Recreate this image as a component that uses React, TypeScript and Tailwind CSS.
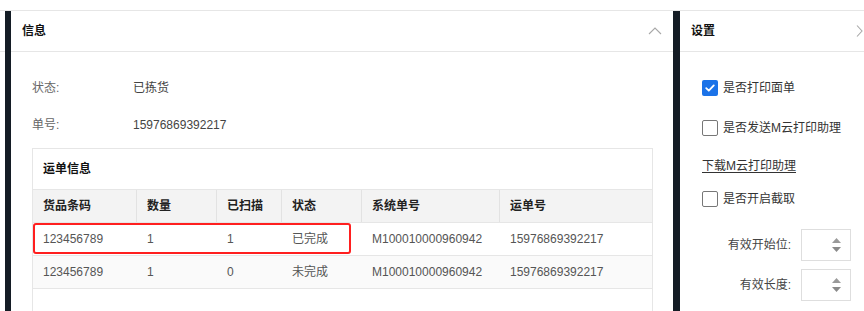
import React from "react";

const font = { fontFamily: '"Liberation Sans", "Noto Sans CJK SC", sans-serif' };

function Checkbox({ checked }: { checked?: boolean }) {
  if (checked) {
    return (
      <span className="w-[16px] h-[16px] rounded-[2px] bg-[#1b73e8] flex items-center justify-center shrink-0">
        <svg width="12" height="12" viewBox="0 0 12 12">
          <path d="M2.2 6.2 L4.8 8.7 L9.8 3.4" fill="none" stroke="#fff" strokeWidth="1.8" strokeLinecap="round" strokeLinejoin="round" />
        </svg>
      </span>
    );
  }
  return <span className="w-[16px] h-[16px] rounded-[2px] border border-[#777] bg-white shrink-0" />;
}

function NumInput() {
  return (
    <div className="w-[50px] h-[32px] border border-[#dedede] bg-white flex justify-end items-center pr-[9px] shrink-0">
      <div className="flex flex-col gap-[4px]">
        <svg width="9" height="5" viewBox="0 0 9 5"><path d="M0 5 L4.5 0 L9 5 Z" fill="#9a9a9a" /></svg>
        <svg width="9" height="5" viewBox="0 0 9 5"><path d="M0 0 L4.5 5 L9 0 Z" fill="#8a8a8a" /></svg>
      </div>
    </div>
  );
}

const cols = [
  { title: "货品条码", w: "w-[104px]" },
  { title: "数量", w: "w-[80px]" },
  { title: "已扫描", w: "w-[65px]" },
  { title: "状态", w: "w-[80px]" },
  { title: "系统单号", w: "w-[138px]" },
  { title: "运单号", w: "flex-1" },
];

const rows = [
  ["123456789", "1", "1", "已完成", "M100010000960942", "15976869392217"],
  ["123456789", "1", "0", "未完成", "M100010000960942", "15976869392217"],
];

export default function App() {
  return (
    <div className="w-[864px] h-[311px] overflow-hidden bg-white text-[12px] text-[#333]" style={font}>
      <div className="h-[10px]" />
      <div className="flex border-t border-[#e6e6e6] h-[301px] overflow-hidden">
        {/* left strip */}
        <div className="w-[5px] flex flex-col">
          <div className="h-[41px] shrink-0 border-b border-[#e6e6e6]" />
        </div>
        <div className="w-[6px] bg-[#141c25]" />
        {/* main panel */}
        <div className="w-[662px] flex flex-col">
          <div className="h-[41px] shrink-0 border-b border-[#e6e6e6] flex items-center justify-between pl-[11px] pr-[11px]">
            <span className="font-bold text-[#111]">信息</span>
            <svg width="14" height="8" viewBox="0 0 14 8">
              <path d="M1 7 L7 1 L13 7" fill="none" stroke="#a8a8a8" strokeWidth="1.1" />
            </svg>
          </div>
          <div className="pl-[21px] pr-[21px] pt-[17px] shrink-0">
            <div className="h-[37px] flex items-center">
              <span className="w-[101px] text-[#666]">状态:</span>
              <span className="text-[#444]">已拣货</span>
            </div>
            <div className="h-[37px] flex items-center">
              <span className="w-[101px] text-[#666]">单号:</span>
              <span className="text-[#444]">15976869392217</span>
            </div>
            <div className="mt-[5px] w-[621px] h-[180px] border border-[#e6e6e6] relative">
              <div className="h-[40px] flex items-center pl-[10px] font-bold text-[#111]">运单信息</div>
              <div className="flex h-[34px] bg-[#f3f3f3] border-t border-b border-[#e6e6e6]">
                {cols.map((c, i) => (
                  <div
                    key={c.title}
                    className={`${c.w} flex items-center pl-[10px] font-bold text-[#222] ${i < cols.length - 1 ? "border-r border-[#e2e2e2]" : ""}`}
                  >
                    {c.title}
                  </div>
                ))}
              </div>
              {rows.map((r, ri) => (
                <div key={ri} className={`flex h-[33px] border-b border-[#e6e6e6] ${ri === 1 ? "bg-[#fafafa]" : "bg-white"}`}>
                  {r.map((v, i) => (
                    <div key={i} className={`${cols[i].w} flex items-center pl-[10px] text-[#555]`}>
                      {v}
                    </div>
                  ))}
                </div>
              ))}
              <div className="absolute left-[0px] top-[74px] w-[318px] h-[31px] border-[2px] border-[#ff1f1f] rounded-[3px]" />
            </div>
          </div>
        </div>
        <div className="w-[7px] bg-[#141c25]" />
        {/* settings panel */}
        <div className="flex-1 flex flex-col">
          <div className="h-[41px] shrink-0 border-b border-[#e6e6e6] flex items-center justify-between pl-[11px] pr-[1px]">
            <span className="font-bold text-[#111]">设置</span>
            <svg width="7" height="12" viewBox="0 0 7 12">
              <path d="M1 0.5 L6 6 L1 11.5" fill="none" stroke="#a8a8a8" strokeWidth="1.1" />
            </svg>
          </div>
          <div className="pl-[22px] pt-[27px] flex flex-col">
            <div className="flex items-center gap-[5px] h-[18px]">
              <Checkbox checked />
              <span>是否打印面单</span>
            </div>
            <div className="flex items-center gap-[5px] h-[18px] mt-[22px]">
              <Checkbox />
              <span>是否发送M云打印助理</span>
            </div>
            <div className="mt-[20px] h-[18px] flex items-center">
              <span className="underline underline-offset-2">下载M云打印助理</span>
            </div>
            <div className="flex items-center gap-[5px] h-[18px] mt-[15px]">
              <Checkbox />
              <span>是否开启截取</span>
            </div>
            <div className="flex items-center mt-[21px]">
              <span className="w-[99px] text-right pr-[10px] text-[#444]">有效开始位:</span>
              <NumInput />
            </div>
            <div className="flex items-center mt-[8px]">
              <span className="w-[99px] text-right pr-[10px] text-[#444]">有效长度:</span>
              <NumInput />
            </div>
          </div>
        </div>
      </div>
    </div>
  );
}
